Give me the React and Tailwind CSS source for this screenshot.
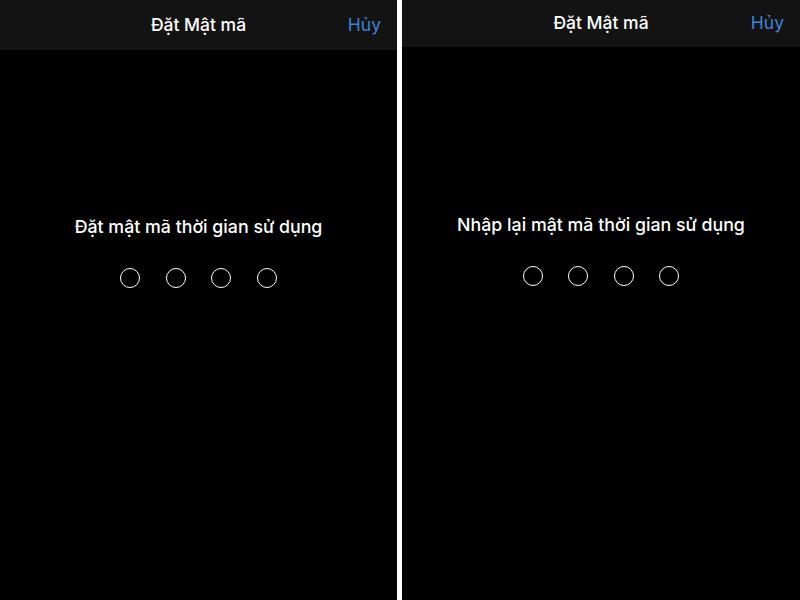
const font = { fontFamily: 'Inter, "Noto Sans", sans-serif' };

function Panel({ headerH, prompt, padTop, dots }) {
  return (
    <div className="flex flex-1 flex-col bg-black">
      <div
        className={`grid grid-cols-[1fr_auto_1fr] items-center bg-[#131313] ${headerH}`}
      >
        <div />
        <div className="text-[17.5px] font-medium text-white">Đặt Mật mã</div>
        <div className="pr-[16px] text-right text-[17.5px] text-[#3d84dc]">Hủy</div>
      </div>
      <div className={`flex flex-col items-center ${padTop}`}>
        <div className="text-[17.8px] font-medium leading-[24px] text-white">{prompt}</div>
        <div className={`mt-[29px] flex ${dots}`}>
          {[0, 1, 2, 3].map((i) => (
            <div key={i} className="h-[20px] w-[20px] rounded-full border-[1.5px] border-white" />
          ))}
        </div>
      </div>
    </div>
  );
}

export default function App() {
  return (
    <div className="flex h-[600px] w-[800px] bg-black" style={font}>
      <div className="flex w-[397px]">
        <Panel
          headerH="h-[50px]"
          prompt="Đặt mật mã thời gian sử dụng"
          padTop="pt-[165px]"
          dots="gap-[25.5px]"
        />
      </div>
      <div className="w-[5px] bg-white" />
      <div className="flex flex-1">
        <Panel
          headerH="h-[47px]"
          prompt="Nhập lại mật mã thời gian sử dụng"
          padTop="pt-[166px]"
          dots="gap-[25.5px]"
        />
      </div>
    </div>
  );
}
